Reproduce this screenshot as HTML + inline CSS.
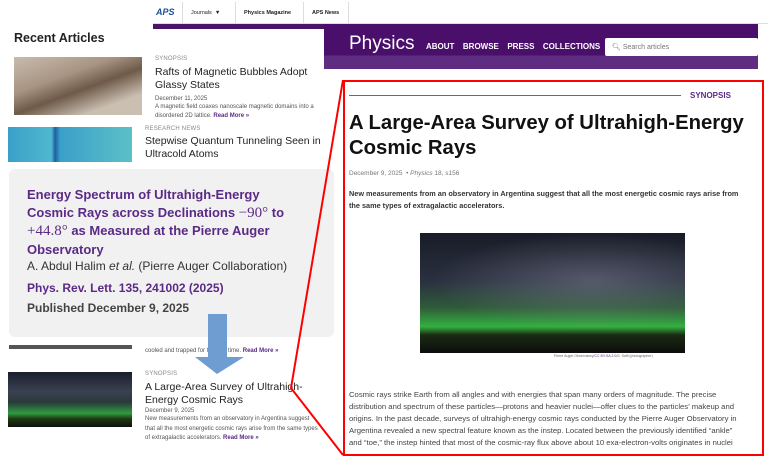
<!DOCTYPE html>
<html><head><meta charset="utf-8"><style>
*{margin:0;padding:0;box-sizing:border-box}
body{width:768px;height:458px;overflow:hidden;background:#fff;font-family:"Liberation Sans",sans-serif;position:relative}
.a{position:absolute;white-space:nowrap}
.small{font-size:6px;color:#555}
.lbl{font-size:6px;color:#888;letter-spacing:.2px}
.t{font-size:10.5px;color:#222;line-height:12.5px}
.p{color:#5b2a86}
.card{position:absolute;left:9px;top:169px;width:325px;height:168px;background:#f1f1f1;border-radius:6px}
.ct{font-size:13px;font-weight:bold;color:#5b2a86;line-height:17.5px}
.m{font-family:'Liberation Serif',serif;font-weight:normal;font-size:15px}
</style></head><body>
<div class="a" style="left:153px;top:0;width:615px;height:24px;background:#fff;border-bottom:1px solid #ddd"></div>
<div class="a" style="left:156px;top:7px;font-size:9px;font-weight:bold;color:#1a4f9c;font-style:italic">APS</div>
<div class="a" style="left:182px;top:2px;width:1px;height:22px;background:#ddd"></div>
<div class="a" style="left:191px;top:10px;font-size:5.5px;color:#222">Journals &nbsp;▼</div>
<div class="a" style="left:235px;top:2px;width:1px;height:22px;background:#ddd"></div>
<div class="a" style="left:244px;top:10px;font-size:5.5px;color:#222;font-weight:bold">Physics Magazine</div>
<div class="a" style="left:303px;top:2px;width:1px;height:22px;background:#ddd"></div>
<div class="a" style="left:312px;top:10px;font-size:5.5px;color:#222;font-weight:bold">APS News</div>
<div class="a" style="left:348px;top:2px;width:1px;height:22px;background:#ddd"></div>
<div class="a" style="left:153px;top:24px;width:172px;height:5px;background:#4a1568"></div>
<div class="a" style="left:324px;top:24px;width:434px;height:45px;background:linear-gradient(#4a0f6b 0 70%,#5e2c80 70%)"></div>
<div class="a" style="left:349px;top:33px;font-size:19px;color:#fff">Physics</div>
<div class="a" style="left:426px;top:42px;font-size:8px;color:#fff;font-weight:bold;word-spacing:2px">ABOUT &nbsp;BROWSE &nbsp;PRESS &nbsp;COLLECTIONS</div>
<div class="a" style="left:605px;top:38px;width:153px;height:18px;background:#fff;border-radius:2px"></div>
<div class="a" style="left:612px;top:43px;font-size:7px;color:#777">🔍︎ Search articles</div>

<div class="a" style="left:14px;top:31px;font-size:12.5px;font-weight:bold;color:#222">Recent Articles</div>
<div class="a" style="left:14px;top:57px;width:128px;height:58px;background:linear-gradient(160deg,#c8bcae 0,#a89583 35%,#6e5a48 55%,#cbbfb2 80%)"></div>
<div class="a lbl" style="left:155px;top:56px">SYNOPSIS</div>
<div class="a t" style="left:155px;top:66px">Rafts of Magnetic Bubbles Adopt<br>Glassy States</div>
<div class="a small" style="left:155px;top:96px">December 11, 2025</div>
<div class="a small" style="left:155px;top:103px;line-height:9px">A magnetic field coaxes nanoscale magnetic domains into a<br>disordered 2D lattice. <b class="p">Read More »</b></div>
<div class="a" style="left:8px;top:127px;width:124px;height:35px;background:linear-gradient(90deg,#3aa0c8 0,#4fb8d0 35%,#1f5fa0 38%,#3aa0c8 42%,#5cc0c8 100%)"></div>
<div class="a lbl" style="left:145px;top:126px">RESEARCH NEWS</div>
<div class="a t" style="left:145px;top:135px">Stepwise Quantum Tunneling Seen in<br>Ultracold Atoms</div>

<div class="card"></div>
<div class="a ct" style="left:27px;top:186px">Energy Spectrum of Ultrahigh-Energy<br>Cosmic Rays across Declinations <span class="m">−90°</span> to<br><span class="m">+44.8°</span> as Measured at the Pierre Auger<br>Observatory</div>
<div class="a" style="left:27px;top:259px;font-size:12px;color:#333">A. Abdul Halim <i>et al.</i> (Pierre Auger Collaboration)</div>
<div class="a" style="left:27px;top:281px;font-size:12px;color:#5b2a86;font-weight:bold">Phys. Rev. Lett. 135, 241002 (2025)</div>
<div class="a" style="left:27px;top:301px;font-size:12px;color:#444;font-weight:bold">Published December 9, 2025</div>

<div class="a" style="left:9px;top:345px;width:123px;height:4px;background:#555"></div>
<div class="a small" style="left:145px;top:348px">cooled and trapped for the first time. <b class="p">Read More »</b></div>
<div class="a" style="left:8px;top:372px;width:124px;height:55px;background:linear-gradient(#1a1f2e 0,#3a4050 35%,#2a3a3a 55%,#2f9a40 75%,#1f3a10 85%,#101010 100%)"></div>
<div class="a lbl" style="left:145px;top:371px">SYNOPSIS</div>
<div class="a t" style="left:145px;top:381px">A Large-Area Survey of Ultrahigh-<br>Energy Cosmic Rays</div>
<div class="a small" style="left:145px;top:408px">December 9, 2025</div>
<div class="a small" style="left:145px;top:415px;line-height:9.5px">New measurements from an observatory in Argentina suggest<br>that all the most energetic cosmic rays arise from the same types<br>of extragalactic accelerators. <b class="p">Read More »</b></div>

<svg class="a" style="left:0;top:0" width="768" height="458">
<polygon points="208,314 227,314 227,357 244,357 217,374 195,357 208,357" fill="#6f9dd2"/>
<polyline points="343,80 291,388 343,455" fill="none" stroke="#f00" stroke-width="2"/>
</svg>

<div class="a" style="left:343px;top:80px;width:421px;height:376px;border:2px solid #f00"></div>
<div class="a" style="left:349px;top:95px;width:332px;height:1px;background:#7a5a90"></div>
<div class="a" style="left:690px;top:91px;font-size:8px;font-weight:bold;color:#5b2a86">SYNOPSIS</div>
<div class="a" style="left:349px;top:111px;font-size:20.3px;font-weight:bold;color:#111;line-height:25px">A Large-Area Survey of Ultrahigh-Energy<br>Cosmic Rays</div>
<div class="a" style="left:349px;top:170px;font-size:6.5px;color:#777">December 9, 2025 &nbsp;• <i>Physics</i> 18, s156</div>
<div class="a" style="left:349px;top:188px;font-size:7.3px;font-weight:bold;color:#333;line-height:11.5px">New measurements from an observatory in Argentina suggest that all the most energetic cosmic rays arise from<br>the same types of extragalactic accelerators.</div>
<div class="a" style="left:420px;top:233px;width:265px;height:120px;background:radial-gradient(ellipse 60% 40% at 65% 40%,rgba(150,150,170,.4),transparent),linear-gradient(#181c26 0,#2a3040 40%,#2f5a3a 62%,#34b040 78%,#1a2a12 85%,#0d0d0d 100%)"></div>
<div class="a" style="left:554px;top:354px;font-size:3.5px;color:#666">Pierre Auger Observatory/<span class="p">CC BY-SA 2.0</span>/S. Saffi (photographer)</div>
<div class="a" style="left:349px;top:389px;font-size:7.7px;color:#444;line-height:12px">Cosmic rays strike Earth from all angles and with energies that span many orders of magnitude. The precise<br>distribution and spectrum of these particles—protons and heavier nuclei—offer clues to the particles’ makeup and<br>origins. In the past decade, surveys of ultrahigh-energy cosmic rays conducted by the Pierre Auger Observatory in<br>Argentina revealed a new spectral feature known as the instep. Located between the previously identified “ankle”<br>and “toe,” the instep hinted that most of the cosmic-ray flux above about 10 exa-electron-volts originates in nuclei</div>
</body></html>
